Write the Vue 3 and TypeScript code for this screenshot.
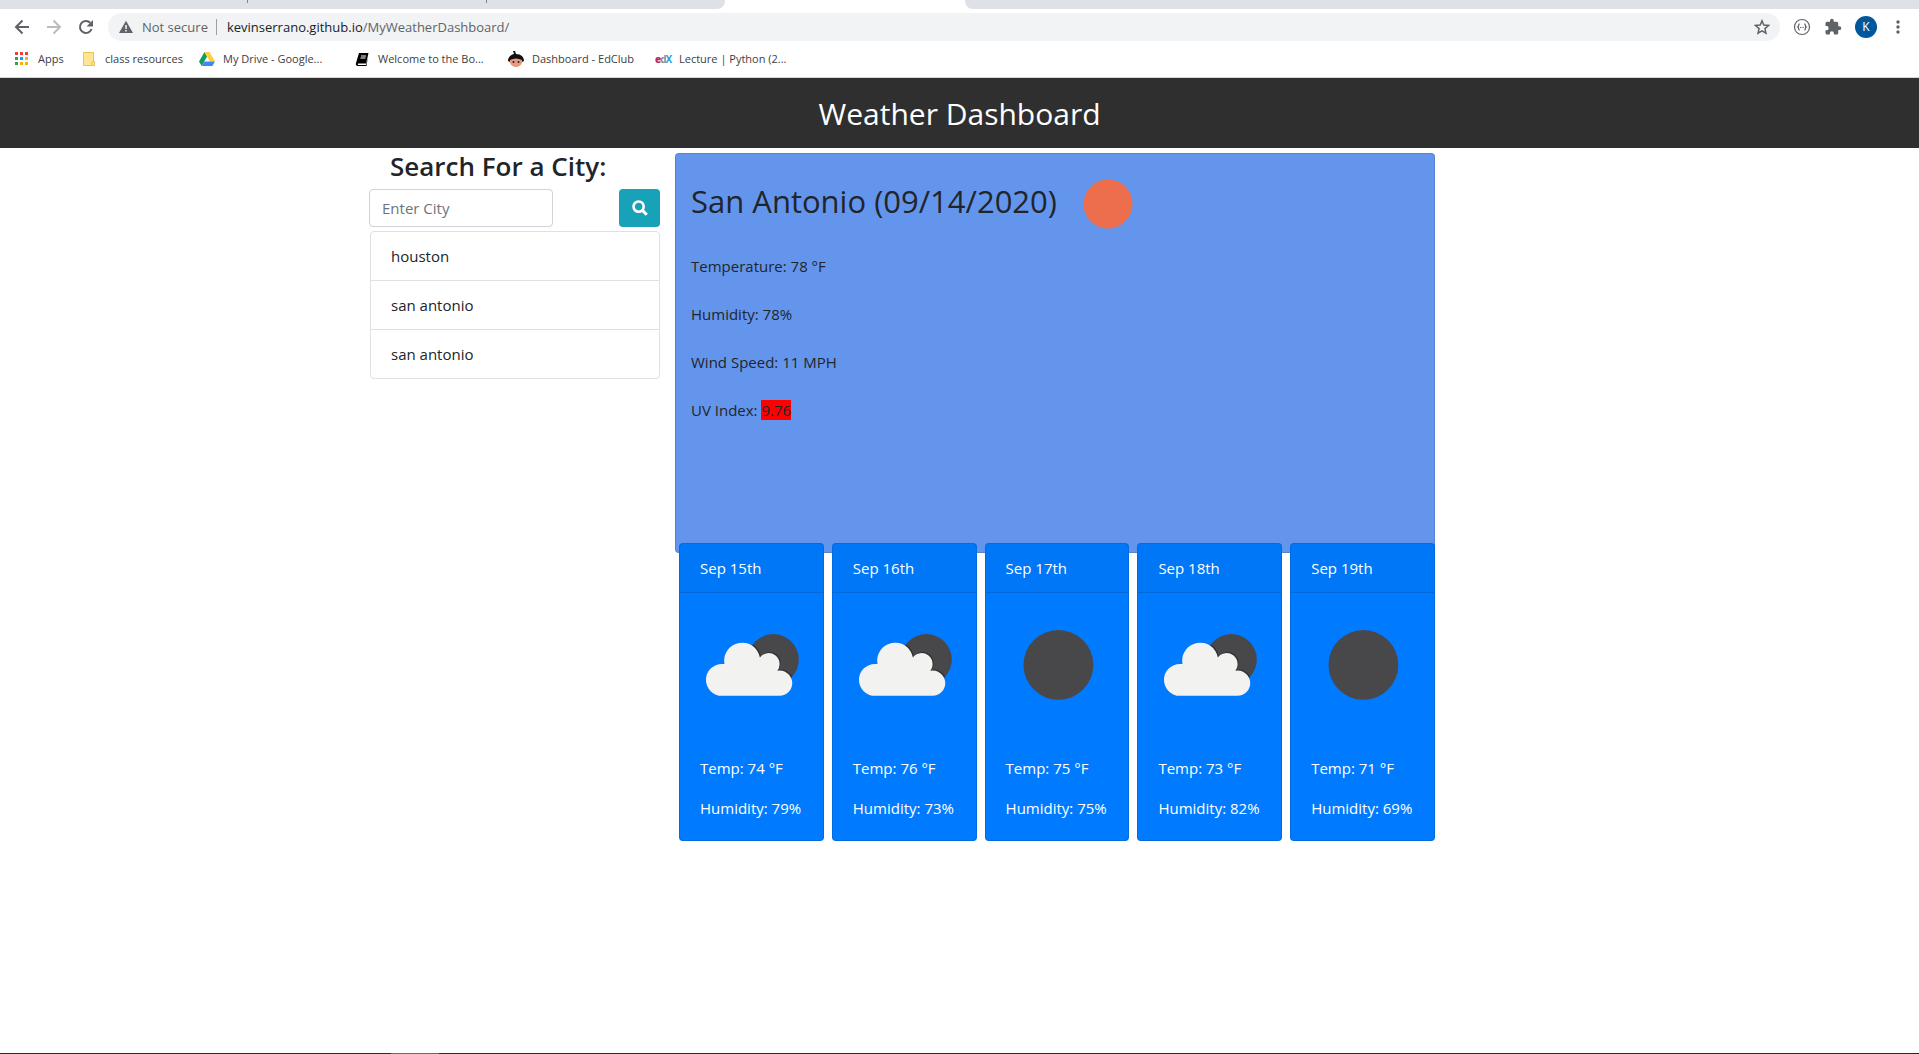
<script setup lang="ts">
import { ref } from 'vue'

interface Forecast {
  day: string
  icon: 'clouds' | 'clear'
  temp: number
  humidity: number
}

const city = ref('')
const history = ref<string[]>(['houston', 'san antonio', 'san antonio'])

const forecast: Forecast[] = [
  { day: 'Sep 15th', icon: 'clouds', temp: 74, humidity: 79 },
  { day: 'Sep 16th', icon: 'clouds', temp: 76, humidity: 73 },
  { day: 'Sep 17th', icon: 'clear', temp: 75, humidity: 75 },
  { day: 'Sep 18th', icon: 'clouds', temp: 73, humidity: 82 },
  { day: 'Sep 19th', icon: 'clear', temp: 71, humidity: 69 },
]

function search() {
  const name = city.value.trim()
  if (name) history.value.push(name)
  city.value = ''
}
</script>

<template>
  <div class="window">
    <div class="tabs">
      <div class="tab-group"><i class="divider"></i><i class="divider"></i></div>
      <div class="tab-active"></div>
      <div class="tab-rest"></div>
    </div>

    <div class="toolbar">
      <button class="tool" type="button" aria-label="Back">
        <svg width="16" height="16" viewBox="0 0 16 16"><path d="M15 8H2.500M8.500 1.500L2 8l6.500 6.500" fill="none" stroke="#5f6368" stroke-width="2" /></svg>
      </button>
      <button class="tool" type="button" aria-label="Forward">
        <svg width="16" height="16" viewBox="0 0 16 16"><path d="M1 8h12.500M7.500 1.500L14 8l-6.500 6.500" fill="none" stroke="#babcbe" stroke-width="2" /></svg>
      </button>
      <button class="tool" type="button" aria-label="Reload">
        <svg width="16" height="16" viewBox="0 0 16 16">
          <path d="M13.600 10A6 6 0 1 1 12.300 3.800" fill="none" stroke="#5f6368" stroke-width="2" />
          <path d="M15 1v6.500H8.500z" fill="#5f6368" />
        </svg>
      </button>
      <div class="omnibox">
        <svg width="14" height="14" viewBox="0 0 14 14"><path d="M7 .8L14 13H0z" fill="#5f6368" /><path d="M6.200 5h1.600v4H6.200zM6.200 10h1.600v1.600H6.200z" fill="#f1f3f4" /></svg>
        <span class="secure">Not secure</span>
        <div class="url" role="textbox" aria-label="Address" contenteditable="true" spellcheck="false"><span class="host">kevinserrano.github.io</span>/MyWeatherDashboard/</div>
        <button class="star" type="button" aria-label="Bookmark this page">
          <svg width="16" height="16" viewBox="0 0 16 16"><path d="M8 1.800l1.800 4.300 4.700.4-3.600 3.100 1.100 4.600L8 11.800l-4 2.400 1.100-4.600L1.500 6.500l4.700-.4z" fill="none" stroke="#5f6368" stroke-width="1.500" /></svg>
        </button>
      </div>
      <div class="extensions">
        <button class="tool" type="button" aria-label="JSON viewer">
          <svg width="18" height="18" viewBox="0 0 18 18" fill="none" stroke="#5f6368">
            <circle cx="9" cy="9" r="7.500" stroke-width="1.200" />
            <path d="M6.600 6c-1.600 0-.4 2.400-1.800 3 1.400.6.200 3 1.800 3M11.400 6c1.600 0 .4 2.400 1.800 3-1.400.6-.2 3-1.800 3" stroke-width="1.300" />
            <path d="M7 9.500h4" stroke-dasharray="1 .6" />
          </svg>
        </button>
        <button class="tool" type="button" aria-label="Extensions">
          <svg width="18" height="18" viewBox="0 0 24 24"><path d="M20.500 11H19V7a2 2 0 0 0-2-2h-4V3.500a2.500 2.500 0 0 0-5 0V5H4a2 2 0 0 0-2 2v3.800h1.500a2.700 2.700 0 0 1 0 5.400H2V20a2 2 0 0 0 2 2h3.800v-1.500a2.700 2.700 0 0 1 5.400 0V22H17a2 2 0 0 0 2-2v-4h1.500a2.500 2.500 0 0 0 0-5z" fill="#5f6368" /></svg>
        </button>
        <button class="avatar" type="button" aria-label="Profile">K</button>
        <button class="tool" type="button" aria-label="Menu">
          <svg width="4" height="14" viewBox="0 0 4 14" fill="#5f6368"><circle cx="2" cy="2" r="1.700" /><circle cx="2" cy="7" r="1.700" /><circle cx="2" cy="12" r="1.700" /></svg>
        </button>
      </div>
    </div>

    <nav class="bookmarks" aria-label="Bookmarks">
      <a href="#apps">
        <svg width="16" height="16" viewBox="0 0 16 16">
          <path d="M1 1h3v3H1zM6 1h3v3H6zM11 1h3v3h-3z" fill="#ee4035" />
          <path d="M1 6h3v3H1zM1 11h3v3H1z" fill="#2aa35a" />
          <path d="M6 6h3v3H6z" fill="#2196f3" />
          <path d="M11 6h3v3h-3zM6 11h3v3H6zM11 11h3v3h-3z" fill="#f5b400" />
        </svg>
        Apps
      </a>
      <a href="#class-resources">
        <svg width="16" height="16" viewBox="0 0 16 16"><path d="M2.500 1.500h10v9h1v4h-11z" fill="#ffe694" stroke="#e8c64c" /><path d="M11 14v-3.500h1.500" fill="none" stroke="#e8c64c" /></svg>
        class resources
      </a>
      <a href="#drive">
        <svg width="16" height="16" viewBox="0 0 16 16">
          <path d="M5.500 1L0 10.500 2.700 15 8 5.500z" fill="#0f9d58" />
          <path d="M5.500 1h5l5.500 9.500h-5.200z" fill="#ffcd40" />
          <path d="M5.300 10.500H16L13.400 15H2.700z" fill="#4285f4" />
        </svg>
        My Drive - Google...
      </a>
      <a href="#boot-camp">
        <svg width="16" height="16" viewBox="0 0 16 16">
          <path d="M5 2h9.500L12 12.500H4.500c-1 0-1 1.500 0 1.500H12l2-8.500-1.500 9.500H4C2 15 1.500 13.500 2 12z" fill="#000" />
          <path d="M7 5h5M6.500 7h5" stroke="#fff" />
        </svg>
        Welcome to the Bo...
      </a>
      <a href="#edclub">
        <svg width="16" height="16" viewBox="0 0 16 16">
          <path d="M5 0h2l1 3c5 0 8 3 8 7l-2 1H2L0 10c0-4 3-6.500 6-7z" fill="#111" />
          <path d="M2 9q6-3 12 0v3q-2 4-6 4t-6-4z" fill="#e99a7e" />
          <circle cx="5.500" cy="11" r="1" fill="#222" /><circle cx="10.500" cy="11" r="1" fill="#222" />
        </svg>
        Dashboard - EdClub
      </a>
      <a href="#edx">
        <span class="edx" aria-hidden="true"><b>e</b><i>d</i><em>X</em></span>
        Lecture | Python (2...
      </a>
    </nav>

    <header class="banner"><h1>Weather Dashboard</h1></header>

    <main class="content">
      <aside class="sidebar">
        <h2><label for="city">Search For a City:</label></h2>
        <form class="search" @submit.prevent="search">
          <input id="city" v-model="city" type="text" placeholder="Enter City" />
          <button type="submit" aria-label="Search">
            <svg width="16" height="16" viewBox="0 0 16 16" fill="none" stroke="#fff"><circle cx="6.600" cy="6.600" r="5.100" stroke-width="2.600" /><path d="M10.400 10.400l4.400 4.400" stroke-width="3" /></svg>
          </button>
        </form>
        <ul class="history">
          <li v-for="(name, i) in history" :key="i">{{ name }}</li>
        </ul>
      </aside>

      <section class="weather">
        <article class="current">
          <div class="place">
            <h2>San Antonio (09/14/2020)</h2>
            <svg width="50" height="50" viewBox="0 0 50 50"><circle cx="25" cy="25" r="24.500" fill="#ec6e4c" /></svg>
          </div>
          <p>Temperature: 78 °F</p>
          <p>Humidity: 78%</p>
          <p>Wind Speed: 11 MPH</p>
          <p>UV Index: <span class="uv">9.76</span></p>
        </article>

        <div class="forecast">
          <article v-for="f in forecast" :key="f.day" class="card">
            <h3>{{ f.day }}</h3>
            <div class="card-body">
              <svg v-if="f.icon === 'clouds'" viewBox="0 0 103 103">
                <clipPath id="sun-area"><circle cx="73.500" cy="46.500" r="25.500" /></clipPath>
                <circle cx="73.500" cy="46.500" r="25.500" fill="#48484a" />
                <g clip-path="url(#sun-area)">
                  <path d="M22 83a16 16 0 0 1 0-32h2.500A18 18 0 1 1 60 44.500a10.800 10.800 0 0 1 17.500 13.300A12.700 12.700 0 1 1 79.500 83z" fill="#2f2f31" transform="translate(1 -1)" />
                </g>
                <path d="M22 83a16 16 0 0 1 0-32h2.500A18 18 0 1 1 60 44.500a10.800 10.800 0 0 1 17.500 13.300A12.700 12.700 0 1 1 79.500 83z" fill="#f2f2f0" />
              </svg>
              <svg v-else viewBox="0 0 103 103"><circle cx="52.500" cy="52" r="35" fill="#48484a" /></svg>
              <p>Temp: {{ f.temp }} °F</p>
              <p>Humidity: {{ f.humidity }}%</p>
            </div>
          </article>
        </div>
      </section>
    </main>

    <div class="taskbar"><i></i></div>
  </div>
</template>

<style>
body {
  margin: 0;
  background: #fff;
}
</style>

<style scoped>
* {
  box-sizing: border-box;
}
.window {
  display: flex;
  flex-direction: column;
  min-height: 100vh;
  font-family: "Open Sans", "Noto Sans", sans-serif;
  font-size: 15px;
  line-height: 24px;
  color: #212529;
}
h1, h2, h3, p, ul {
  margin: 0;
  padding: 0;
  font-weight: 400;
}
button, input {
  font: inherit;
  border: 0;
  padding: 0;
  background: none;
}
svg {
  display: block;
  flex: none;
}

/* browser frame */
.tabs {
  display: flex;
  height: 9px;
}
.tab-group {
  display: flex;
  gap: 238px;
  width: 725px;
  padding-left: 247px;
  background: #dee1e6;
  border-bottom-right-radius: 8px;
}
.divider {
  width: 1px;
  height: 3px;
  background: #808489;
}
.tab-active {
  width: 240px;
}
.tab-rest {
  flex: 1;
  background: #dee1e6;
  border-bottom-left-radius: 8px;
}
.toolbar {
  display: flex;
  align-items: center;
  gap: 16px;
  height: 36px;
  padding: 0 19px 0 14px;
}
.omnibox {
  display: flex;
  flex: 1;
  align-items: center;
  height: 28px;
  margin-left: -2px;
  padding: 0 10px 0 11px;
  border-radius: 14px;
  background: #f1f3f4;
  font-size: 13px;
  color: #5f6368;
}
.secure {
  margin-left: 9px;
  padding-right: 8px;
  border-right: 1px solid #9aa0a6;
  line-height: 16px;
}
.url {
  flex: 1;
  margin-left: 10px;
  outline: none;
}
.host {
  color: #202124;
}
.extensions {
  display: flex;
  align-items: center;
  gap: 13px;
  margin-left: -3px;
}
.avatar {
  width: 22px;
  height: 22px;
  border-radius: 50%;
  background: #01579b;
  color: #fff;
  font-size: 12px;
  line-height: 22px;
}
.extensions .avatar {
  margin-right: 6px;
}
.bookmarks {
  display: grid;
  grid-template-columns: 67px 118px 155px 154px 147px auto;
  align-items: center;
  height: 33px;
  padding: 0 14px 4px;
  border-bottom: 1px solid #d5d6d8;
  font-size: 11px;
}
.bookmarks a {
  display: flex;
  align-items: center;
  gap: 8px;
  color: #3c4043;
  text-decoration: none;
  white-space: nowrap;
}
.edx {
  display: flex;
  width: 16px;
  font-size: 10px;
  line-height: 16px;
  font-weight: 700;
}
.edx b { color: #b72667; }
.edx i { color: #8a8c8f; font-style: normal; margin-left: -1px; }
.edx em { color: #2a9de0; font-style: normal; margin-left: -1px; }

/* page */
.banner {
  height: 70px;
  padding: 12px;
  background: #2f2f2f;
  color: #fff;
  text-align: center;
}
.banner h1 {
  font-size: 30px;
  line-height: 48px;
}
.content {
  display: flex;
  gap: 15px;
  width: 100%;
  max-width: 1181px;
  margin: 0 auto;
  flex: 1;
}
.sidebar {
  width: 291px;
  flex: none;
}
.sidebar h2 {
  padding: 1px 21px 6px;
  font-size: 26px;
  line-height: 34px;
  font-weight: 600;
  white-space: nowrap;
}
.search {
  display: flex;
  justify-content: space-between;
}
.search input {
  width: 184px;
  height: 38px;
  padding: 0 12px;
  border: 1px solid #ced4da;
  border-radius: 4px;
}
.search input::placeholder {
  color: #6c757d;
  opacity: 1;
}
.search button {
  display: grid;
  place-items: center;
  width: 41px;
  height: 38px;
  border-radius: 4px;
  background: #17a2b8;
}
.history {
  margin: 4px 0 0 1px;
  border: 1px solid #dfe0e4;
  border-radius: 4px;
  list-style: none;
}
.history li {
  padding: 12px 20px;
}
.history li + li {
  border-top: 1px solid #dfe0e4;
}
.weather {
  flex: 0 1 760px;
  padding-top: 5px;
}
.current {
  height: 400px;
  padding: 15px;
  border: 1px solid rgba(0, 0, 0, 0.125);
  border-radius: 4px;
  background: #6495ed;
}
.place {
  display: flex;
  align-items: center;
  gap: 26px;
  height: 70px;
  margin-bottom: 15px;
}
.place h2 {
  padding-bottom: 6px;
  font-size: 31px;
  line-height: 40px;
}
.current p {
  margin-bottom: 24px;
}
.uv {
  background: #f00;
}
.forecast {
  display: grid;
  grid-template-columns: repeat(5, 1fr);
  gap: 8px;
  margin: -10px 0 0 4px;
}
.card {
  border: 1px solid rgba(0, 0, 0, 0.125);
  border-radius: 4px;
  background: #007bff;
  color: #fff;
  white-space: nowrap;
}
.card h3 {
  padding: 12px 20px;
  border-bottom: 1px solid rgba(0, 0, 0, 0.125);
  background: rgba(0, 0, 0, 0.03);
  font-size: 15px;
}
.card-body {
  padding: 20px;
}
.card-body svg {
  width: 100%;
  margin-bottom: 40px;
}
.card-body p + p {
  margin-top: 16px;
}
.taskbar {
  height: 1px;
  padding-left: 391px;
  background: #2b2a2b;
}
.taskbar i {
  display: block;
  width: 48px;
  height: 1px;
  background: #6a6a6a;
}
</style>
